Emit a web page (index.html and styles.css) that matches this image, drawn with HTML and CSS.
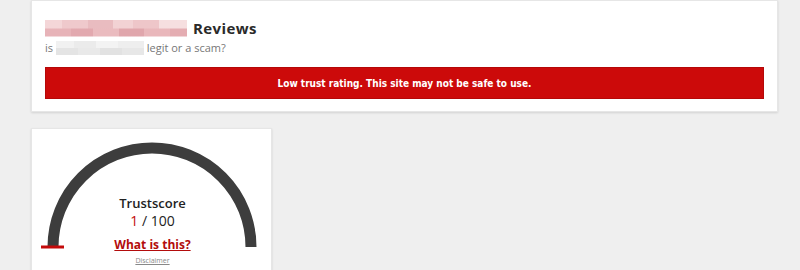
FILE: index.html
```html
<!DOCTYPE html>
<html lang="en">
<head>
  <meta charset="UTF-8">
  <title>Reviews</title>
  <link rel="stylesheet" href="styles.css">
</head>
<body>

<div class="page">
  <section class="card header-card">
    <h1><span class="blur-name"></span>Reviews</h1>
    <p class="sub">is <span class="blur-site"></span> legit or a scam?</p>
    <div class="alert">Low trust rating. This site may not be safe to use.</div>
  </section>

  <section class="card score-card">
    <svg class="gauge" width="241" height="141" viewBox="0 0 241 141">
      <path d="M21 118 A99 99 0 0 1 219 118" fill="none" stroke="#3d3d3d" stroke-width="11"/>
      <rect x="9" y="116.5" width="23" height="3" fill="#c40a0a"/>
    </svg>
    <div class="score">
      <div class="score-label">Trustscore</div>
      <div class="score-value"><span class="low">1</span> / 100</div>
      <a class="what" href="#">What is this?</a>
      <a class="disclaimer" href="#">Disclaimer</a>
    </div>
  </section>
</div>

</body>
</html>
```

FILE: styles.css
```css
body { margin: 0; background: #efefef; font-family: "Open Sans", Arial, sans-serif; }
.page { padding: 0 22px 0 31px; }
.card { background: #fff; box-shadow: 0 1px 2px rgba(0,0,0,0.12); border: 1px solid #e6e6e6; }

.header-card { padding: 16px 13px 12px 13px; margin-bottom: 16px; }
h1 { margin: 0; font-size: 15px; font-weight: 700; color: #2a2a2a; display: flex; align-items: center; height: 22px; letter-spacing: 0.4px; }
.blur-name {
  display: inline-block; width: 142px; height: 17px; margin-right: 6px;
  background:
    linear-gradient(90deg, #f4d6d8 0 12%, #efc9cc 12% 30%, #e9bcc0 30% 48%, #f2d2d4 48% 62%, #eec6c9 62% 80%, #f6dfe0 80% 100%) top / 100% 50% no-repeat,
    linear-gradient(90deg, #e7b3b8 0 18%, #e2a9af 18% 34%, #eabbbf 34% 52%, #e0a6ac 52% 70%, #e9b7bb 70% 88%, #e4adb2 88% 100%) bottom / 100% 50% no-repeat;
}
.sub { margin: 1px 0 0; font-size: 11px; color: #777; line-height: 16px; }
.blur-site {
  display: inline-block; width: 88px; height: 14px; vertical-align: -3px;
  background:
    linear-gradient(90deg, #f1f1f1 0 20%, #ebebeb 20% 45%, #f3f3f3 45% 70%, #eeeeee 70% 100%) top / 100% 50% no-repeat,
    linear-gradient(90deg, #e4e4e4 0 25%, #e9e9e9 25% 50%, #e2e2e2 50% 75%, #e7e7e7 75% 100%) bottom / 100% 50% no-repeat;
}
.alert { margin-top: 11px; height: 30px; background: #cc0a0a; border: 1px solid #b50808; color: #fff; font-family: "DejaVu Sans Condensed", "DejaVu Sans", sans-serif; font-weight: bold; font-size: 10px; display: flex; align-items: center; justify-content: center; }

.score-card { width: 239px; height: 150px; display: grid; }
.gauge, .score { grid-area: 1 / 1; }
.score { display: flex; flex-direction: column; align-items: center; padding-top: 66px; }
.score-label { font-size: 13px; font-weight: 600; color: #222; line-height: 17px; }
.score-value { font-size: 14px; color: #222; line-height: 17px; }
.low { color: #c40a0a; }
.what { margin-top: 7px; font-size: 12px; font-weight: 700; color: #b30c0c; line-height: 17px; }
.disclaimer { margin-top: 3px; font-size: 7px; color: #888; }
```
